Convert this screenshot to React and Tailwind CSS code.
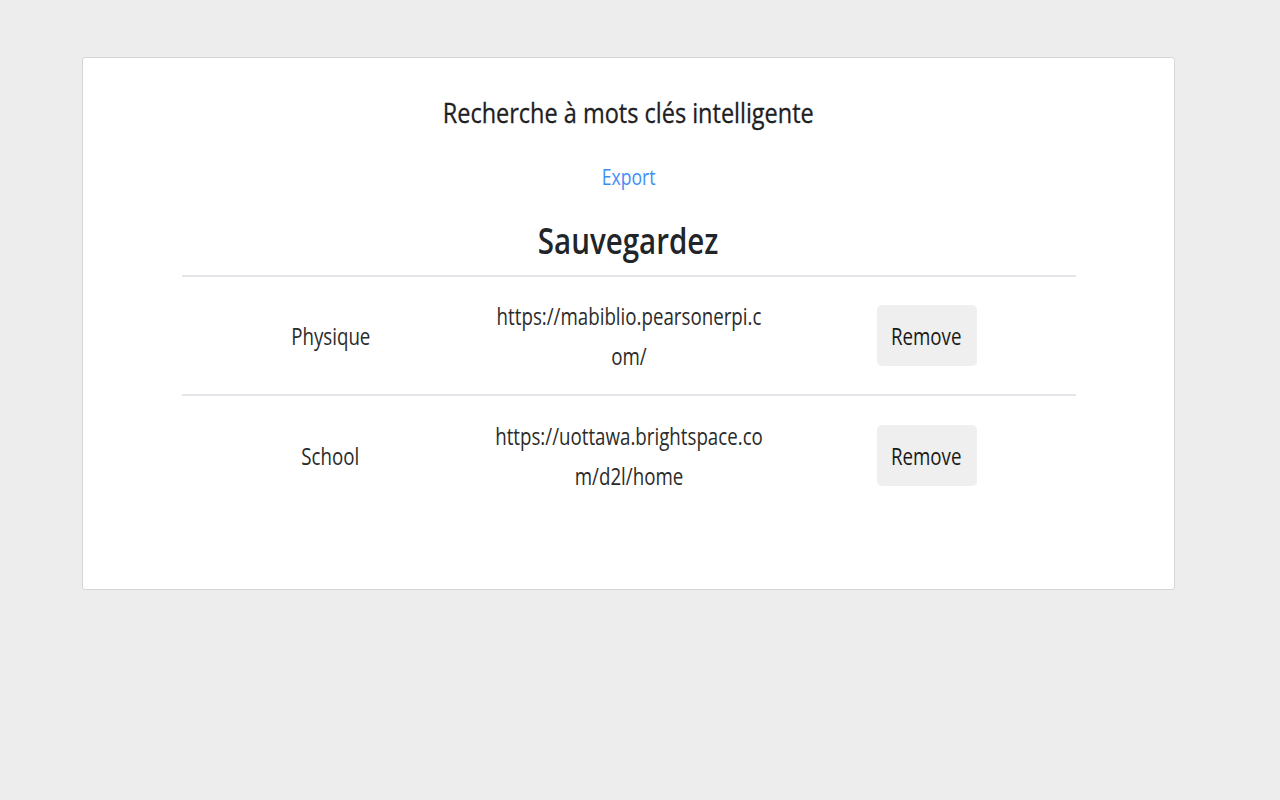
import React from 'react';

const bookmarks = [
  { id: 1, label: 'Physique', url: 'https://mabiblio.pearsonerpi.com/' },
  { id: 2, label: 'School', url: 'https://uottawa.brightspace.com/d2l/home' },
];

// Open Sans is wider than the original UI font, so squeeze text horizontally
const Squeeze = ({ children, className = 'scale-x-[0.78]' }) => (
  <span className={`inline-block ${className}`}>{children}</span>
);

export default function App() {
  return (
    <div className="min-h-screen bg-[#ededed] pt-[57px] pl-[82px] font-['Open_Sans',sans-serif] text-[#212529]">
      <div className="w-[1093px] h-[533px] bg-white border border-[#d6d6d6] rounded-[3px] pt-[35px]">
        <div className="flex flex-col items-center">
          <h2 className="text-[27px] leading-[40px] text-[#1e2023] [-webkit-text-stroke:0.3px_#1e2023]">
            <Squeeze className="scale-x-[0.87]">Recherche à mots clés intelligente</Squeeze>
          </h2>
          <a href="#" className="mt-[27px] text-[22px] leading-[32px] text-[#3d8ef5]">
            <Squeeze className="scale-x-[0.8]">Export</Squeeze>
          </a>
          <h1 className="mt-[25px] text-[36px] leading-[48px] font-semibold">
            <Squeeze className="scale-x-[0.82]">Sauvegardez</Squeeze>
          </h1>
        </div>

        <div className="w-[894px] mx-auto mt-[10px] border-t-2 border-[#e3e5e8]">
          {bookmarks.map((b, i) => (
            <div
              key={b.id}
              className={`grid grid-cols-3 items-center h-[119px] text-[24px] leading-[40px] text-[#2b2b2b] ${
                i < bookmarks.length - 1 ? 'border-b-2 border-[#e3e5e8]' : ''
              }`}
            >
              <div className="flex justify-center">
                <Squeeze>{b.label}</Squeeze>
              </div>
              <div className="flex justify-center">
                <div className="w-[346px] shrink-0 text-center break-all scale-x-[0.78]">{b.url}</div>
              </div>
              <div className="flex justify-center">
                <button className="w-[100px] h-[61px] rounded-[5px] bg-[#efefef] text-[24px] text-[#1a1a1a]">
                  <Squeeze>Remove</Squeeze>
                </button>
              </div>
            </div>
          ))}
        </div>
      </div>
    </div>
  );
}
